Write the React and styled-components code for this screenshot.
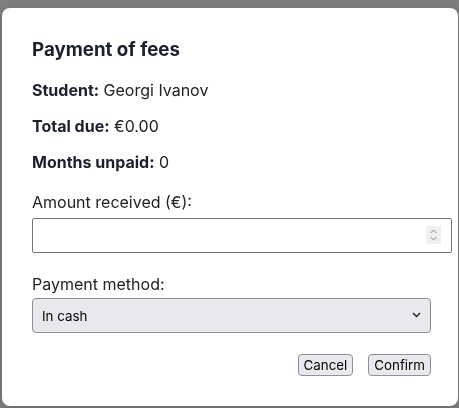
import React from "react";
import styled, { createGlobalStyle } from "styled-components";

const Global = createGlobalStyle`
  html, body { margin: 0; padding: 0; background: #fff; }
  body { font-family: Inter, "Noto Sans", sans-serif; }
`;

const Overlay = styled.div`
  position: fixed;
  inset: 0;
  background: rgba(0, 0, 0, 0.5);
  display: flex;
  align-items: flex-start;
  padding: 8px 0 0 2px;
  box-sizing: border-box;
`;

const Modal = styled.div`
  width: 456px;
  box-sizing: border-box;
  background: #fff;
  border-radius: 8px;
  padding: 30px 27px 30px 30px;
  display: flex;
  flex-direction: column;
  box-shadow: 0 4px 16px rgba(0, 0, 0, 0.2);
`;

const Title = styled.h3`
  margin: 0 0 18px;
  font-size: 18.72px;
  line-height: 24px;
  font-weight: 700;
  color: #1a202c;
`;

const InfoRow = styled.p`
  margin: 0 0 16px;
  font-size: 16px;
  line-height: 20px;
  color: #222;
  strong { font-weight: 700; color: #1a202c; }
`;

const Label = styled.label`
  display: block;
  margin-top: ${(p) => p.$top}px;
  margin-bottom: ${(p) => p.$bottom}px;
  font-size: 16px;
  line-height: 20px;
  color: #222;
`;

const InputWrap = styled.div`
  position: relative;
  width: 420px;
`;

const NumberInput = styled.input`
  display: block;
  width: 100%;
  height: 35px;
  box-sizing: border-box;
  border: 1px solid #767676;
  border-radius: 2px;
  padding: 0 8px;
  font: 16px Inter, sans-serif;
  background: #fff;
  -moz-appearance: textfield;
  &::-webkit-inner-spin-button,
  &::-webkit-outer-spin-button { -webkit-appearance: none; margin: 0; }
`;

const Spinner = styled.svg`
  position: absolute;
  right: 11px;
  top: 8px;
  pointer-events: none;
`;

const SelectWrap = styled.div`
  position: relative;
  width: 399px;
`;

const Select = styled.select`
  display: block;
  width: 100%;
  height: 35px;
  box-sizing: border-box;
  appearance: none;
  -webkit-appearance: none;
  background: #e9e9ed;
  border: 1px solid #8f8f9d;
  border-radius: 4px;
  padding: 0 9px;
  font: 13.33px Inter, sans-serif;
  color: #000;
`;

const Chevron = styled.svg`
  position: absolute;
  right: 10px;
  top: 14px;
  pointer-events: none;
`;

const Actions = styled.div`
  display: flex;
  justify-content: flex-end;
  gap: 15px;
  width: 399px;
  margin-top: 21px;
`;

const Button = styled.button`
  height: 22px;
  box-sizing: border-box;
  padding: 0 5px;
  background: #e9e9ed;
  border: 1px solid #8f8f9d;
  border-radius: 4px;
  font: 13.33px Inter, sans-serif;
  color: #000;
`;

export default function App() {
  return (
    <>
      <Global />
      <Overlay>
        <Modal>
          <Title>Payment of fees</Title>
          <InfoRow><strong>Student:</strong> Georgi Ivanov</InfoRow>
          <InfoRow><strong>Total due:</strong> €0.00</InfoRow>
          <InfoRow><strong>Months unpaid:</strong> 0</InfoRow>
          <Label htmlFor="amt" $top={4} $bottom={6}>Amount received (€):</Label>
          <InputWrap>
            <NumberInput id="amt" type="number" />
            <Spinner width="15" height="18" viewBox="0 0 15 18">
              <rect x="0" y="0" width="15" height="18" fill="#efefef" />
              <path d="M4.5 7 L7.5 4 L10.5 7" fill="none" stroke="#8a8a8a" strokeWidth="1" />
              <path d="M4.5 11 L7.5 14 L10.5 11" fill="none" stroke="#8a8a8a" strokeWidth="1" />
            </Spinner>
          </InputWrap>
          <Label htmlFor="method" $top={21} $bottom={4}>Payment method:</Label>
          <SelectWrap>
            <Select id="method" defaultValue="cash">
              <option value="cash">In cash</option>
              <option value="card">By card</option>
            </Select>
            <Chevron width="9" height="6" viewBox="0 0 9 6">
              <path d="M1 1 L4.5 4.5 L8 1" fill="none" stroke="#222" strokeWidth="1.4" />
            </Chevron>
          </SelectWrap>
          <Actions>
            <Button>Cancel</Button>
            <Button>Confirm</Button>
          </Actions>
        </Modal>
      </Overlay>
    </>
  );
}
